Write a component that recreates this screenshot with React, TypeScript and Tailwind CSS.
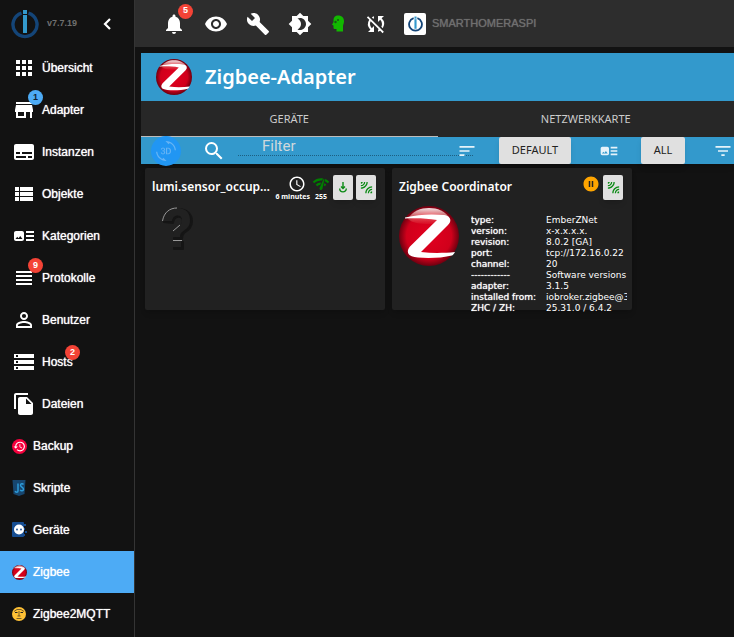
import React from 'react';
import {
  MdApps,
  MdStore,
  MdSubtitles,
  MdViewList,
  MdArtTrack,
  MdViewHeadline,
  MdPermIdentity,
  MdStorage,
  MdFileCopy,
  MdHistory,
  MdNotifications,
  MdVisibility,
  MdBuild,
  MdBrightness4,
  MdSyncDisabled,
  MdSearch,
  Md3dRotation,
  MdSort,
  MdFilterList,
  MdAccessTime,
  MdNetworkCheck,
  MdLeakAdd,
  MdPauseCircleFilled,
} from 'react-icons/md';

interface MenuItem {
  name: string;
  icon: React.ReactNode;
  badge?: string;
  badgeClass?: string;
  adapter?: boolean;
  active?: boolean;
}

const ZigbeeLogo: React.FC<{ className: string; id: string }> = ({ className, id }) => (
  <svg viewBox="0 0 60 60" className={className} aria-hidden="true">
    <defs>
      <radialGradient id={`${id}-ball`} cx="50%" cy="50%" r="50%">
        <stop offset="0" stopColor="#e2001f" />
        <stop offset="0.75" stopColor="#d0001b" />
        <stop offset="1" stopColor="#6e0010" />
      </radialGradient>
      <linearGradient id={`${id}-shine`} x1="0" y1="0" x2="0" y2="1">
        <stop offset="0" stopColor="#fff" stopOpacity="0.9" />
        <stop offset="1" stopColor="#f08070" stopOpacity="0.1" />
      </linearGradient>
    </defs>
    <circle cx="30" cy="30" r="30" fill={`url(#${id}-ball)`} />
    <path d="M9 13C13 5 22 2 30 2s17 3 21 11c-4 4-12 5-21 5S13 17 9 13z" fill={`url(#${id}-shine)`} />
    <path
      d="M6 11.500C20 8 34 8 45 9c7 1 8 6 4 10L22 46c12 1.500 24 1 34 0-1 2-2 3-3 3.500-10 2.500-24 3-34 2-11-.5-12-6-8-11L38 14c-11-2-22-2-32-1.500z"
      fill="#fff"
    />
  </svg>
);

const IoBrokerLogo: React.FC<{ className: string }> = ({ className }) => (
  <svg viewBox="0 0 28 30" className={className} aria-hidden="true">
    <path d="M10.500 4.100a12 12 0 1 0 7 0" fill="none" stroke="#144578" strokeWidth="3.400" />
    <rect x="12" y="6" width="4" height="18" fill="#3399cc" />
    <rect x="12" y="1" width="4" height="4" fill="#3399cc" />
  </svg>
);

const HeadIcon = () => (
  <svg viewBox="0 0 12 17" className="h-[17px] w-3" aria-hidden="true">
    <path
      d="M5 0.500C8 0 12 1.500 12 6c0 2.500-1 3.500-1 5v5.500H4.500V14H2.500c-1 0-1-.8-1-1.500V10.500L0 9.800 1.500 7V5C1.500 2.500 3 1 5 .500z"
      fill="#12b800"
    />
    <circle cx="3.500" cy="7" r="1.200" fill="#165b10" />
    <circle cx="6" cy="5" r="1" fill="#165b10" />
  </svg>
);

const ScriptIcon = () => (
  <svg viewBox="0 0 14 16" className="h-4 w-[14px]" aria-hidden="true">
    <path d="M0.500 0h13l-1 14L7 16l-5.500-2z" fill="#17466f" />
    <path d="M6 3.500v7.500c0 1.500-2.500 1.500-2.800 0M11.500 4.500c-1-1.200-3-.8-3 .8 0 1.900 3 1.600 3 3.900 0 1.700-2.300 2.200-3.300.700" fill="none" stroke="#2c9bd8" strokeWidth="1.500" />
  </svg>
);

const DevicesIcon = () => (
  <svg viewBox="0 0 16 16" className="size-4" aria-hidden="true">
    <rect x="1" width="12" height="15" rx="1" fill="#164d91" />
    <path d="M13 2h2v2h-2zM12 6h2v2h-2zM14 9h2v2h-2zM12 12h2v2h-2z" fill="#164d91" />
    <circle cx="8" cy="7.500" r="5" fill="#fff" />
    <circle cx="6" cy="7.500" r="0.900" fill="#164d91" />
    <circle cx="10" cy="7.500" r="0.900" fill="#164d91" />
  </svg>
);

const MqttIcon = () => (
  <svg viewBox="0 0 16 16" className="size-4" aria-hidden="true">
    <circle cx="8" cy="8" r="7" fill="#ffc135" />
    <path d="M3 5.500l3-2h4l3 2M8 5v5M5.500 12.500h5" fill="none" stroke="#6a5225" strokeWidth="0.900" />
    <path d="M4 6h2.500v1H4zM9.500 6H12v1H9.500z" fill="#222" />
    <path d="M6.500 9.500h3v1h-3z" fill="#6a5225" />
  </svg>
);

const QuestionMark = () => (
  <svg viewBox="0 0 34 46" className="mt-[5px] ml-4 h-[46px] w-[34px]" aria-hidden="true">
    <g fill="#151515" stroke="#151515" strokeWidth="2" strokeLinejoin="round" transform="translate(1 1)">
      <path d="M2 14C3 5 9 1 16 1c9 0 14 5 14 12 0 7-4 9-8 12-2 2-2 3-2 6h-8c0-7 1-9 5-12 3-2 4-3 4-6 0-6-9-6-10 2z" />
      <path d="M12 34h9v7h-9z" />
    </g>
    <g fill="#212121">
      <path d="M2 14C3 5 9 1 16 1c9 0 13 5 13 12 0 7-4 9-8 12-2 2-2 3-2 5h-7c0-6 1-8 5-11 3-2 4-3 4-6 0-6-9-6-10 1z" />
      <path d="M12 34h8v6h-8z" />
    </g>
    <path d="M1.500 14C3 5 9 1 16 1M12 24l7-6M12 33.500h9" fill="none" stroke="#999" />
  </svg>
);

const PairIcon = () => (
  <svg viewBox="0 0 8 11" className="h-[11px] w-2" fill="none" stroke="#0a8a14" strokeWidth="1.400" aria-hidden="true">
    <path d="M4 0v6.500M2 4.500L4 6.500l2-2M.7 6.500C.7 11 7.300 11 7.300 6.500" />
  </svg>
);

const menu: MenuItem[] = [
  { name: 'Übersicht', icon: <MdApps size={24} /> },
  { name: 'Adapter', icon: <MdStore size={24} />, badge: '1', badgeClass: 'top-px left-7 bg-[#4dabf5] text-[#123]' },
  { name: 'Instanzen', icon: <MdSubtitles size={24} /> },
  { name: 'Objekte', icon: <MdViewList size={24} /> },
  { name: 'Kategorien', icon: <MdArtTrack size={24} /> },
  { name: 'Protokolle', icon: <MdViewHeadline size={24} />, badge: '9', badgeClass: 'top-px left-7 bg-[#f44336] text-white' },
  { name: 'Benutzer', icon: <MdPermIdentity size={24} /> },
  { name: 'Hosts', icon: <MdStorage size={24} />, badge: '2', badgeClass: 'top-1 left-[65px] bg-[#f44336] text-white' },
  { name: 'Dateien', icon: <MdFileCopy size={24} /> },
  {
    name: 'Backup',
    adapter: true,
    icon: (
      <span className="flex size-[15px] items-center justify-center rounded-full bg-[#f5003d] text-white">
        <MdHistory size={13} />
      </span>
    ),
  },
  { name: 'Skripte', adapter: true, icon: <ScriptIcon /> },
  { name: 'Geräte', adapter: true, icon: <DevicesIcon /> },
  { name: 'Zigbee', adapter: true, active: true, icon: <ZigbeeLogo id="menu" className="size-[15px]" /> },
  { name: 'Zigbee2MQTT', adapter: true, icon: <MqttIcon /> },
];

const coordinator = [
  ['type:', 'EmberZNet'],
  ['version:', 'x-x.x.x.x.'],
  ['revision:', '8.0.2 [GA]'],
  ['port:', 'tcp://172.16.0.22'],
  ['channel:', '20'],
  ['------------', 'Software versions'],
  ['adapter:', '3.1.5'],
  ['installed from:', 'iobroker.zigbee@3.1.5'],
  ['ZHC / ZH:', '25.31.0 / 6.4.2'],
];

const Sidebar = () => (
  <aside className="w-[135px] shrink-0 border-r border-[#343434] bg-[#121212]">
    <div className="flex h-[47px] items-center pl-[11px]">
      <IoBrokerLogo className="h-[30px] w-7" />
      <span className="ml-2 w-[50px] text-[9px] font-bold text-[#6f6f6f]">v7.7.19</span>
      <button type="button" aria-label="Menü schließen" className="ml-[6px] text-white">
        <svg viewBox="0 0 8 12" className="h-3 w-2" fill="none" stroke="currentColor" strokeWidth="2.200">
          <path d="M7 1L2 6l5 5" />
        </svg>
      </button>
    </div>
    <nav>
      {menu.map((item) => (
        <a
          key={item.name}
          href="#"
          className={`relative flex h-[42px] items-center gap-[6px] text-[12px] text-white [text-shadow:0_0_1px_#fff] ${
            item.adapter ? 'pl-[11px]' : 'pl-3'
          } ${item.active ? 'bg-[#4dabf5]' : ''}`}
        >
          <span className={`flex shrink-0 justify-center ${item.adapter ? 'w-4' : 'w-6'}`}>{item.icon}</span>
          {item.name}
          {item.badge && (
            <span
              className={`absolute flex size-[15px] items-center justify-center rounded-full text-[9px] font-bold [text-shadow:none] ${item.badgeClass}`}
            >
              {item.badge}
            </span>
          )}
        </a>
      ))}
    </nav>
  </aside>
);

const TopBar = () => (
  <header className="flex h-[47px] items-center bg-[#2d2d2d] pl-[27px] text-white">
    <div className="flex items-center gap-[18px]">
      <button type="button" aria-label="Benachrichtigungen" className="relative">
        <MdNotifications size={24} />
        <span className="absolute -top-2 left-4 flex size-[15px] items-center justify-center rounded-full bg-[#f44336] text-[9px] font-bold">
          5
        </span>
      </button>
      <button type="button" aria-label="Sichtbarkeit"><MdVisibility size={24} /></button>
      <button type="button" aria-label="Einstellungen"><MdBuild size={24} /></button>
      <button type="button" aria-label="Farbschema"><MdBrightness4 size={24} /></button>
      <button type="button" aria-label="Expertenmodus" className="flex w-4 justify-center"><HeadIcon /></button>
      <button type="button" aria-label="Synchronisation"><MdSyncDisabled size={24} /></button>
    </div>
    <span className="ml-4 flex size-[22px] items-center justify-center rounded-xs bg-white">
      <IoBrokerLogo className="h-4 w-[15px]" />
    </span>
    <span className="ml-[6px] text-[11px] text-[#6f6f6f] [text-shadow:0_0_1px_#6f6f6f]">SMARTHOMERASPI</span>
  </header>
);

const Toolbar = () => (
  <div className="flex h-[27px] items-center bg-[#3399cc] pl-[10px] text-white shadow-md">
    <button
      type="button"
      aria-label="3D"
      className="relative flex size-[30px] shrink-0 items-center justify-center rounded-full bg-[#2196f3] text-[#67b4f4]"
    >
      <Md3dRotation size={20} />
    </button>
    <MdSearch size={24} className="ml-[21px] shrink-0" />
    <input
      type="text"
      aria-label="Filter"
      placeholder="Filter"
      className="mb-2 ml-3 h-[18px] min-w-0 flex-1 border-b border-dotted border-[#1d5f82] pl-6 font-[Roboto] text-[15px] outline-none placeholder:text-[#cfd8dc]"
    />
    <button type="button" aria-label="Sortierung" className="relative mr-[22px] -ml-4">
      <MdSort size={20} className="text-[#e6f3fa]" />
    </button>
    <button type="button" className="h-[27px] w-[72px] rounded-xs bg-[#e0e0e0] text-[11px] text-[#222] shadow-md">
      DEFAULT
    </button>
    <MdArtTrack size={20} className="mr-[22px] ml-7 text-[#e6f3fa]" />
    <button type="button" className="h-[27px] w-11 rounded-xs bg-[#e0e0e0] text-[11px] text-[#222] shadow-md">
      ALL
    </button>
    <MdFilterList size={20} className="mr-px ml-7 text-[#e6f3fa]" />
  </div>
);

const cardClass = 'h-[142px] w-[240px] rounded-xs bg-[#212121] shadow-md';
const smallButton = 'ml-[3px] flex h-[25px] w-5 items-center justify-center rounded-xs bg-[#e0e0e0] text-[#0a8a14] shadow-md';

const DeviceCard = () => (
  <section className={cardClass}>
    <div className="flex h-[34px] items-start pt-[7px] pr-[9px] pl-[7px]">
      <h2 className="mt-[2px] min-w-0 flex-1 truncate text-[12px] leading-5 font-semibold">lumi.sensor_occupancy</h2>
      <div className="flex w-[37px] flex-col items-end pr-px text-[7px] leading-[8px] font-bold whitespace-nowrap">
        <MdAccessTime size={18} className="mr-1" />
        6 minutes
      </div>
      <div className="ml-px flex w-[18px] flex-col items-center text-[7px] leading-[8px] font-bold">
        <MdNetworkCheck size={18} className="text-[#008000]" stroke="currentColor" />
        255
      </div>
      <button type="button" aria-label="Pairing" className={smallButton}><PairIcon /></button>
      <button type="button" aria-label="Verbindung" className={smallButton}><MdLeakAdd size={15} /></button>
    </div>
    <QuestionMark />
  </section>
);

const CoordinatorCard = () => (
  <section className={cardClass}>
    <div className="flex h-[34px] items-start pt-[7px] pr-[9px] pl-[7px]">
      <h2 className="mt-[2px] flex-1 text-[12px] leading-5 font-semibold">Zigbee Coordinator</h2>
      <MdPauseCircleFilled size={18} className="text-[#ffa500]" />
      <button type="button" aria-label="Verbindung" className={smallButton}><MdLeakAdd size={15} /></button>
    </div>
    <div className="flex pr-[5px] pl-[7px]">
      <ZigbeeLogo id="card" className="mt-1 size-[60px] shrink-0" />
      <table className="mt-[13px] ml-3 w-full table-fixed text-left font-['DejaVu_Sans',sans-serif] text-[9px] leading-[11px]">
        <tbody>
          {coordinator.map(([label, value]) => (
            <tr key={label}>
              <th className="w-[75px] overflow-hidden p-0 font-normal whitespace-nowrap [text-shadow:0_0_1px_#fff]">{label}</th>
              <td className="overflow-hidden p-0 whitespace-nowrap">{value}</td>
            </tr>
          ))}
        </tbody>
      </table>
    </div>
  </section>
);

const App: React.FC = () => {
  return (
    <div className="flex min-h-screen bg-[#121212] font-['Liberation_Sans',sans-serif] text-white">
      <Sidebar />
      <div className="min-w-0 flex-1">
        <TopBar />
        <main className="mt-[6px] ml-[6px] font-['Noto_Sans',sans-serif]">
          <div className="flex h-12 items-center gap-[13px] bg-[#3399cc] pl-[15px]">
            <ZigbeeLogo id="title" className="size-9" />
            <h1 className="text-[20px] font-semibold">Zigbee-Adapter</h1>
          </div>
          <div className="grid h-9 grid-cols-2 bg-[#272727] text-[11px] text-[#ccc]">
            <button type="button" className="border-y border-t-transparent border-b-[#bdbdbd]">GERÄTE</button>
            <button type="button">NETZWERKKARTE</button>
          </div>
          <Toolbar />
          <div className="flex flex-wrap gap-[7px] p-1">
            <DeviceCard />
            <CoordinatorCard />
          </div>
        </main>
      </div>
    </div>
  );
};

export default App;
